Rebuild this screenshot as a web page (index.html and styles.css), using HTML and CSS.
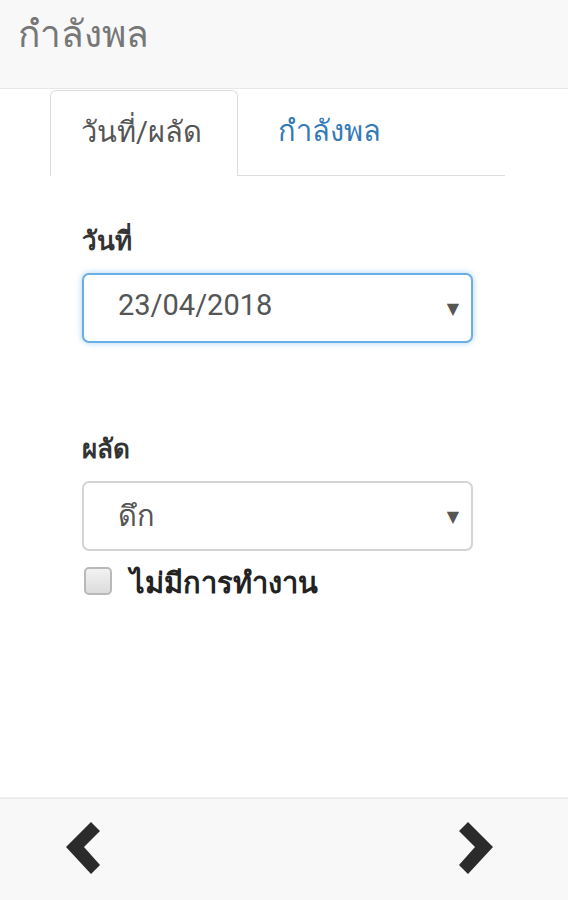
FILE: index.html
```html
<!DOCTYPE html>
<html lang="th">
<head>
<meta charset="utf-8">
<title>กำลังพล</title>
<link rel="stylesheet" href="styles.css">
</head>
<body>
<div class="page">
  <header class="navbar">
    <div class="brand">กำลังพล</div>
  </header>
  <main class="content">
    <ul class="tabs">
      <li class="tab active">วันที่/ผลัด</li>
      <li class="tab link">กำลังพล</li>
      <li class="tab-fill"></li>
    </ul>
    <form class="form">
      <div class="group">
        <div class="label">วันที่</div>
        <div class="select focused"><span class="value num">23/04/2018</span><span class="caret">▼</span></div>
      </div>
      <div class="group second">
        <div class="label">ผลัด</div>
        <div class="select"><span class="value">ดึก</span><span class="caret">▼</span></div>
        <label class="check"><span class="box"></span><span class="check-text">ไม่มีการทำงาน</span></label>
      </div>
    </form>
  </main>
  <footer class="footer">
    <svg class="chev" width="36" height="56" viewBox="0 0 36 56"><path d="M34 9 L25 0 L0 25 L25 52 L34 43 L18 25 Z" fill="#2b2b2b"/></svg>
    <svg class="chev" width="36" height="56" viewBox="0 0 36 56"><path d="M2 9 L11 0 L36 25 L11 52 L2 43 L18 25 Z" fill="#2b2b2b"/></svg>
  </footer>
</div>
</body>
</html>
```

FILE: styles.css
```css
* { box-sizing: border-box; }
html, body { margin: 0; padding: 0; }
body {
  font-family: Roboto, "Noto Sans", "DejaVu Sans", sans-serif;
  background: #fff;
  color: #333;
  width: 568px;
  height: 900px;
  overflow: hidden;
}
.page {
  display: flex;
  flex-direction: column;
  height: 900px;
}
.navbar {
  height: 89px;
  background: #f8f8f8;
  border-bottom: 1px solid #e7e7e7;
  display: flex;
  align-items: center;
  padding-left: 18px;
  padding-bottom: 18px;
}
.brand {
  font-size: 37px;
  color: #777;
  line-height: 44px;
}
.content {
  flex: 1;
  padding-top: 1px;
}
.tabs {
  list-style: none;
  margin: 0 0 0 50px;
  padding: 0;
  width: 455px;
  display: flex;
  height: 86px;
}
.tab {
  height: 86px;
  display: flex;
  align-items: center;
  font-size: 29px;
  padding-bottom: 4px;
}
.tab.active {
  width: 188px;
  padding-left: 30px;
  color: #555;
  border: 1px solid #ddd;
  border-bottom: none;
  border-radius: 6px 6px 0 0;
}
.tab.link {
  padding-left: 40px;
  padding-right: 20px;
  color: #337ab7;
  border-bottom: 1px solid #ddd;
}
.tab-fill {
  flex: 1;
  border-bottom: 1px solid #ddd;
}
.form {
  margin: 0;
  padding: 47px 0 0 82px;
  width: 473px;
}
.label {
  font-size: 26px;
  font-weight: bold;
  color: #333;
  line-height: 36px;
  margin-bottom: 14px;
}
.select {
  height: 70px;
  border: 2px solid #d4d4d4;
  border-radius: 7px;
  display: flex;
  align-items: center;
  justify-content: space-between;
  padding: 0 12px 0 34px;
  background: #fff;
}
.select.focused {
  border-color: #6aaee6;
  box-shadow: 0 0 6px rgba(102, 175, 233, 0.55);
}
.value {
  font-size: 29px;
  color: #555;
}
.num { padding-bottom: 6px; }
.caret {
  font-size: 16px;
  color: #555;
}
.second { margin-top: 88px; }
.check {
  display: flex;
  align-items: center;
  margin-top: 10px;
  gap: 18px;
  line-height: 34px;
}
.box {
  width: 28px;
  height: 28px;
  margin-left: 2px;
  border: 2px solid #b9b9b9;
  border-radius: 5px;
  background: linear-gradient(#f2f2f2, #dcdcdc);
}
.check-text {
  font-size: 29px;
  font-weight: bold;
  color: #222;
  padding-top: 5px;
}
.footer {
  height: 103px;
  background: #f8f8f8;
  border-top: 2px solid #ececec;
  display: flex;
  align-items: center;
  justify-content: space-between;
  padding: 0 75px 0 66px;
}
```
